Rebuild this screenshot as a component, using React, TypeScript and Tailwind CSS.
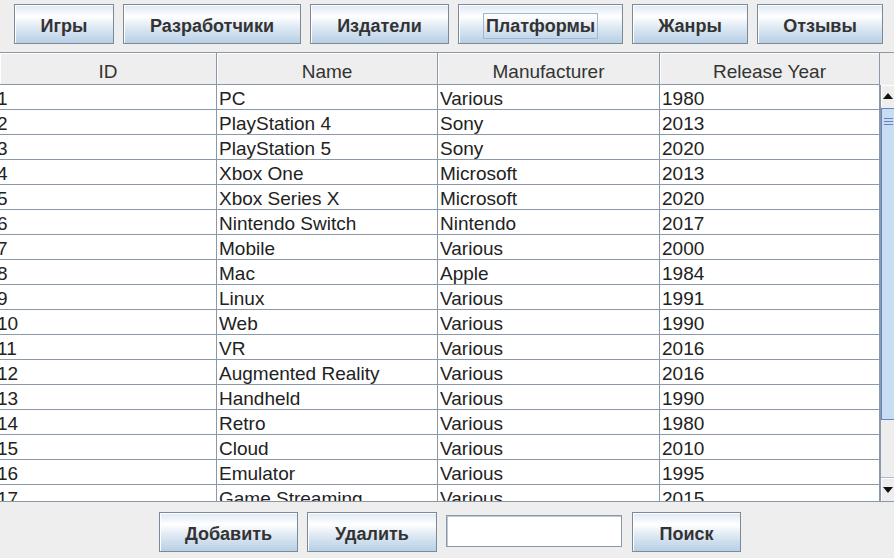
import React from "react";

const rows: [string, string, string, string][] = [
  ["1", "PC", "Various", "1980"],
  ["2", "PlayStation 4", "Sony", "2013"],
  ["3", "PlayStation 5", "Sony", "2020"],
  ["4", "Xbox One", "Microsoft", "2013"],
  ["5", "Xbox Series X", "Microsoft", "2020"],
  ["6", "Nintendo Switch", "Nintendo", "2017"],
  ["7", "Mobile", "Various", "2000"],
  ["8", "Mac", "Apple", "1984"],
  ["9", "Linux", "Various", "1991"],
  ["10", "Web", "Various", "1990"],
  ["11", "VR", "Various", "2016"],
  ["12", "Augmented Reality", "Various", "2016"],
  ["13", "Handheld", "Various", "1990"],
  ["14", "Retro", "Various", "1980"],
  ["15", "Cloud", "Various", "2010"],
  ["16", "Emulator", "Various", "1995"],
  ["17", "Game Streaming", "Various", "2015"],
];

function Btn({ label, w, focus }: { label: string; w: string; focus?: boolean }) {
  return (
    <div
      className={`${w} h-[40px] flex items-center justify-center pt-[3px] border border-[#7a8a99] shadow-[inset_1px_1px_0_#ffffff] bg-[linear-gradient(to_bottom,#dde8f3_0%,#ffffff_30%,#dde8f3_60%,#b8cfe5_100%)] text-[18px] font-bold text-[#333333] leading-none`}
    >
      {focus ? (
        <span className="border border-[#a3b8cc] px-[2px] py-[3px]">{label}</span>
      ) : (
        <span>{label}</span>
      )}
    </div>
  );
}

const cols = "grid grid-cols-[217px_221px_222px_220px]";

export default function App() {
  return (
    <div
      className="w-[894px] h-[558px] bg-[#eeeeee] overflow-hidden flex flex-col"
      style={{ fontFamily: '"Liberation Sans", Arial, sans-serif' }}
    >
      {/* top buttons */}
      <div className="h-[52px] flex items-start pt-[4px] pl-[14px] gap-[9px] shrink-0">
        <Btn label="Игры" w="w-[100px]" />
        <Btn label="Разработчики" w="w-[178px]" />
        <Btn label="Издатели" w="w-[139px]" />
        <Btn label="Платформы" w="w-[165px]" focus />
        <Btn label="Жанры" w="w-[116px]" />
        <Btn label="Отзывы" w="w-[126px]" />
      </div>

      {/* table */}
      <div className="h-[450px] flex shrink-0 border-b border-[#8a98a8] overflow-hidden">
        <div className="w-[880px] flex flex-col shrink-0">
          <div className={`${cols} h-[33px] border-t border-[#8a98a8] border-b border-b-[#8a98a8] bg-[#eeeeee] shadow-[inset_0_1px_0_#ffffff] shrink-0`}>
            {["ID", "Name", "Manufacturer", "Release Year"].map((h) => (
              <div
                key={h}
                className="border-r border-[#8a98a8] flex items-center justify-center pt-[5px] text-[19px] leading-none text-[#333333] shadow-[inset_1px_0_0_#ffffff]"
              >
                {h}
              </div>
            ))}
          </div>
          <div className="flex-1 overflow-hidden bg-white">
            {rows.map((r) => (
              <div key={r[0]} className={`${cols} h-[25px] border-b border-[#8a98a8]`}>
                {r.map((c, i) => (
                  <div
                    key={i}
                    className={`border-r border-[#8a98a8] flex items-center pt-[2px] text-[19px] text-[#222222] whitespace-nowrap overflow-hidden leading-none ${i === 0 ? "pl-0" : "pl-[2px]"}`}
                  >
                    <span className={i === 0 ? "ml-[-3px]" : ""}>{c}</span>
                  </div>
                ))}
              </div>
            ))}
          </div>
        </div>
        {/* scrollbar column */}
        <div className="w-[14px] flex flex-col shrink-0">
          <div className="h-[33px] border-t border-[#8a98a8] bg-[#eeeeee] shrink-0" />
          <div className="flex-1 flex flex-col bg-[#eeeeee] border-l border-[#8a98a8]">
            <div className="h-[21px] flex items-center justify-center shrink-0 shadow-[inset_1px_1px_0_#ffffff]">
              <svg width="10" height="6" viewBox="0 0 10 6">
                <polygon points="5,0 10,6 0,6" fill="#111111" />
              </svg>
            </div>
            <div className="h-[312px] mt-[2px] border border-[#6382bf] border-r-0 bg-[#c8ddf2] flex flex-col items-start pt-[9px] pl-[2px] shrink-0">
              <div className="flex flex-col gap-[2px]">
                <div className="w-[9px] h-[1px] bg-[#6382bf]" />
                <div className="w-[9px] h-[1px] bg-[#6382bf]" />
                <div className="w-[9px] h-[1px] bg-[#6382bf]" />
              </div>
            </div>
            <div className="flex-1" />
            <div className="h-[24px] flex items-center justify-center shrink-0 border-t border-[#b0bccb] shadow-[inset_1px_1px_0_#ffffff]">
              <svg width="10" height="6" viewBox="0 0 10 6">
                <polygon points="0,0 10,0 5,6" fill="#111111" />
              </svg>
            </div>
          </div>
        </div>
      </div>

      {/* bottom bar */}
      <div className="flex-1 flex items-start pt-[10px] pl-[159px] gap-[9px]">
        <Btn label="Добавить" w="w-[139px]" />
        <Btn label="Удалить" w="w-[130px]" />
        <div className="w-[176px] h-[32px] mt-[3px] bg-white border border-[#8a98a8] shadow-[inset_1px_1px_0_#c0c8d0]" />
        <div className="ml-[1px]">
          <Btn label="Поиск" w="w-[109px]" />
        </div>
      </div>
    </div>
  );
}
